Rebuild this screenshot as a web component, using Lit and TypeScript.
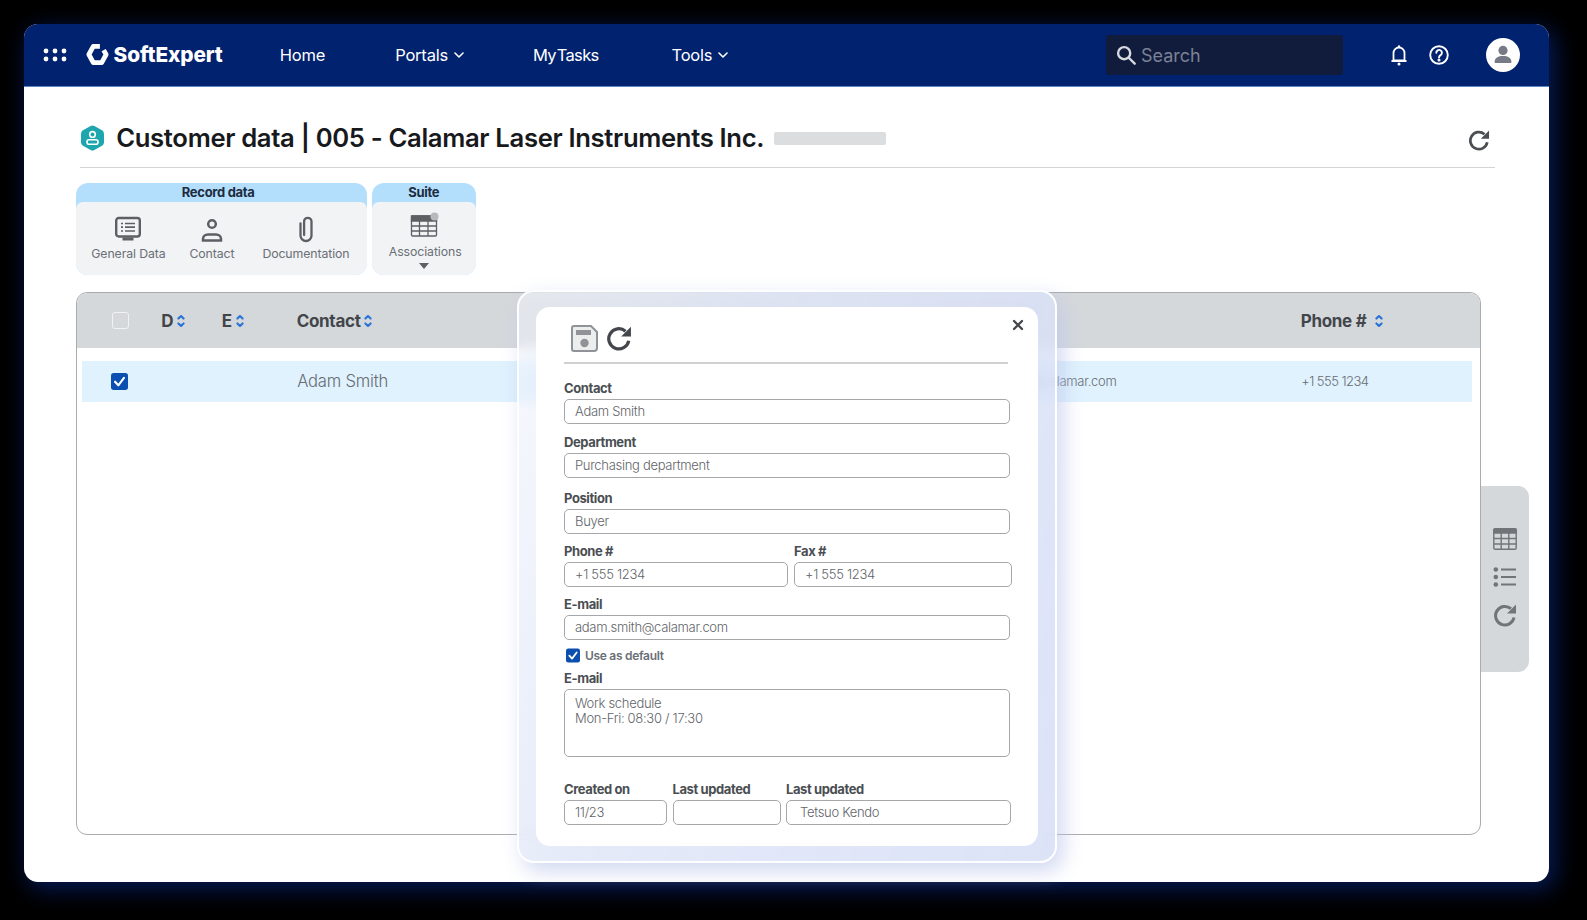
import { LitElement, html, css, svg } from "lit";
import { customElement } from "lit/decorators.js";

const refresh = (cls: string) => html`<svg class=${cls} viewBox="0 0 24 24" fill="none"><path d="M21 14.500A9.300 9.300 0 1 1 18 5.700" stroke="currentColor" stroke-width="3"/><path d="M23 1.500v9h-9z" fill="currentColor"/></svg>`;
const sort = () => html`<svg class="sort" viewBox="0 0 8 14" fill="none" stroke="#2a73d6" stroke-width="2.100" stroke-linecap="round" stroke-linejoin="round"><path d="M1.400 4.600 4 2l2.600 2.600M1.400 9.400 4 12l2.600-2.600"/></svg>`;
const chev = () => html`<svg class="chev" viewBox="0 0 10 6" fill="none" stroke="#fff" stroke-width="1.600" stroke-linecap="round" stroke-linejoin="round"><path d="M1 1l4 4 4-4"/></svg>`;
const check = (cls: string) => html`<svg class=${cls} viewBox="0 0 16 16"><rect width="16" height="16" rx="2.600" fill="#0b4fb0"/><path d="M3.800 8.200 6.900 11.600 12.200 4.600" fill="none" stroke="#fff" stroke-width="2" stroke-linecap="round" stroke-linejoin="round"/></svg>`;
const tableIcon = (cls: string) => html`<svg class=${cls} viewBox="0 0 24 22" fill="none" stroke="currentColor" stroke-width="1.400"><rect x="0.800" y="0.800" width="22.400" height="20.400" rx="1.200"/><path d="M0.800 1.500h22.400v3.500H0.800z" fill="currentColor"/><path d="M0.800 10.500h22.400M0.800 16h22.400M8.200 5v16M15.800 5v16"/></svg>`;

@customElement("app-root")
export class AppRoot extends LitElement {
  static styles = css`
    :host {
      display: block;
      width: 1587px;
      height: 920px;
      box-sizing: border-box;
      padding: 23.5px 0 0 23.5px;
      background: #000;
      overflow: hidden;
      font-family: "Inter", "Noto Sans", sans-serif;
      color: #4a4e52;
    }
    .window {
      position: relative;
      width: 1525.5px;
      height: 858px;
      background: #fff;
      border-radius: 14px;
      box-shadow: 5px 6px 22px 2px rgba(8, 34, 110, 0.75);
      display: flex;
      flex-direction: column;
    }
    .nav {
      height: 63px;
      flex: none;
      display: flex;
      align-items: center;
      box-sizing: border-box;
      padding: 0 29px 0 19px;
      background: #01226f;
      border-bottom: 1px solid #5d86c4;
      border-radius: 14px 14px 0 0;
      color: #fff;
      font-size: 16.5px;
      letter-spacing: -0.2px;
    }
    .dots { width: 24px; height: 14px; flex: none; }
    .hex { width: 23px; height: 23px; margin-left: 19px; flex: none; }
    .brand { font-size: 20.8px; font-weight: 800; margin-left: 5px; letter-spacing: -0.1px; }
    .nav-item { display: flex; align-items: center; gap: 6px; padding-top: 1px; }
    .home { margin-left: 57px; }
    .portals { margin-left: 70px; }
    .tasks { margin-left: 69px; word-spacing: -3px; letter-spacing: -0.7px; }
    .tools { margin-left: 73px; letter-spacing: -0.2px; }
    .chev { width: 10px; height: 6px; }
    .right { margin-left: auto; display: flex; align-items: center; }
    .search {
      width: 237px;
      height: 40px;
      box-sizing: border-box;
      background: #111c3c;
      border-radius: 3px;
      display: flex;
      align-items: center;
      gap: 4px;
      padding: 0 0 0 9px;
      color: #7b8296;
      font-size: 18px;
      letter-spacing: 0;
    }
    .search span { padding-top: 1px; }
    .search svg { width: 22px; height: 22px; flex: none; }
    .bell { width: 18px; height: 22px; margin-left: 47px; }
    .help { width: 20px; height: 20px; margin-left: 21px; }
    .avatar { width: 34px; height: 34px; margin-left: 37px; }

    .content { padding: 31.5px 0 0 52.2px; flex: 1; display: flex; flex-direction: column; }
    .title-row {
      height: 50px;
      width: 1415px;
      margin-left: 4.5px;
      box-sizing: border-box;
      border-bottom: 1px solid #d4d4d4;
      padding-bottom: 10px;
      display: flex;
      align-items: center;
    }
    .title-icon { width: 25px; height: 26px; flex: none; }
    .title-row h1 {
      margin: 0 0 0 11px;
      font-size: 25.65px;
      font-weight: 600;
      color: #17191c;
      letter-spacing: -0.33px;
      white-space: nowrap;
    }
    .blur-bar { width: 112px; height: 13px; margin: 2px 0 0 10px; background: #dcdddf; border-radius: 2px; }
    .title-refresh { width: 22px; height: 22px; margin: 4px 5px 0 auto; color: #4b4f53; }

    .tabs { display: flex; gap: 5px; margin-top: 14.5px; height: 92px; flex: none; }
    .group {
      background: #b3dffd;
      border-radius: 12px;
      display: flex;
      flex-direction: column;
      overflow: hidden;
    }
    .group.rec { width: 291px; }
    .group.suite { width: 104px; }
    .group-head {
      height: 19px;
      flex: none;
      text-align: center;
      font-size: 13px;
      line-height: 18.5px;
      font-weight: 700;
      color: #1d2c3f;
      letter-spacing: -0.3px;
    }
    .rec .group-head { padding-right: 6px; }
    .group-body {
      flex: 1;
      background: #f2f3f5;
      border-radius: 7px 7px 0 0;
      display: grid;
    }
    .rec .group-body { grid-template-columns: 105.5px 61.5px 124px; }
    .tab { display: flex; flex-direction: column; align-items: center; padding-top: 14.5px; color: #6a6f75; font-size: 12.3px; letter-spacing: -0.1px; line-height: 16px; }
    .tab svg.ic { width: 30px; height: 28px; margin-bottom: 2px; color: #5c6065; }
    .tab.doc { padding-left: 2.5px; }
    .suite .tab { padding: 10px 0 0 3px; }
    .suite .tab svg.ic { margin: 0 3px 5px 0; height: 27px; }
    .caret { width: 0; height: 0; border: 5px solid transparent; border-top: 6px solid #5c6065; border-bottom: 0; margin: 3px 2px 0 0; }

    .work { display: flex; margin-top: 17.7px; }
    .table {
      width: 1405.5px;
      height: 542.6px;
      box-sizing: border-box;
      border: 1px solid #a9abad;
      border-radius: 11px;
      overflow: hidden;
      flex: none;
    }
    .grid {
      display: grid;
      grid-template-columns: 49.5px 60.5px 75px 668px 336px 1fr;
      align-items: center;
    }
    .thead {
      height: 55px;
      background: #d5d8db;
      padding-left: 35px;
      font-weight: 700;
      font-size: 17px;
      color: #42464b;
      letter-spacing: -0.3px;
    }
    .th { display: flex; align-items: center; gap: 4px; padding-top: 1px; }
    .th.contact { gap: 3px; }
    .th.phone { gap: 9px; }
    .sort { width: 8px; height: 14px; flex: none; }
    .hcheck { width: 17px; height: 17px; box-sizing: border-box; background: #d5d8db; border: 1.5px solid #f1f2f3; border-radius: 3px; }
    .tbody { padding: 12.5px 8px 0 5px; }
    .row {
      height: 41px;
      background: #dff2fe;
      padding-left: 29px;
      font-size: 13px;
      color: #676c72;
      font-weight: 300;
      letter-spacing: -0.3px;
    }
    .rcheck { width: 17px; height: 17px; display: block; }
    .row .name { font-size: 16.6px; font-weight: 300; letter-spacing: -0.2px; padding: 0 0 1px 1.5px; }
    .row .ph { padding-left: 1.5px; letter-spacing: -0.55px; }
    .side {
      width: 48px;
      height: 186px;
      margin-top: 194px;
      background: #d5d8db;
      border-radius: 0 11px 11px 0;
      display: flex;
      flex-direction: column;
      align-items: center;
      padding-top: 41px;
      box-sizing: border-box;
      gap: 14px;
      color: #70757a;
    }
    .side svg { width: 24px; height: 24px; flex: none; }

    .modal {
      position: absolute;
      left: 493.5px;
      top: 266.5px;
      width: 539.5px;
      height: 573px;
      box-sizing: border-box;
      padding: 15px 17px;
      background: linear-gradient(110deg, rgba(240, 243, 251, 0.5) 0%, rgba(222, 229, 247, 0.8) 35%, rgba(214, 222, 246, 0.85) 100%);
      backdrop-filter: blur(6px);
      border: 2px solid rgba(255, 255, 255, 0.95);
      border-radius: 17px;
      box-shadow: 6px 8px 20px rgba(190, 200, 235, 0.7);
    }
    .sheet {
      position: relative;
      height: 539px;
      background: #fff;
      border-radius: 14px;
      padding: 0 0 0 28px;
      box-sizing: border-box;
      font-size: 13px;
    }
    .close { position: absolute; right: 14px; top: 12px; width: 12px; height: 12px; }
    .tools-bar {
      width: 444px;
      height: 56.500px;
      box-sizing: border-box;
      border-bottom: 2px solid #cfd0d2;
      display: flex;
      align-items: flex-start;
      padding: 18px 0 0 7px;
      gap: 8px;
    }
    .save { width: 27px; height: 27px; color: #8f9397; }
    .mod-refresh { width: 26px; height: 26px; color: #43474b; }
    .form { width: 448.5px; }
    .lab { display: block; height: 16px; line-height: 16px; font-weight: 700; font-size: 13px; color: #4a4e52; letter-spacing: -0.4px; white-space: nowrap; margin-bottom: 3px; }
    .inp {
      height: 24.5px;
      box-sizing: border-box;
      border: 1px solid #a5a7aa;
      border-radius: 5px;
      padding: 0 10px;
      line-height: 23px;
      font-size: 13px;
      font-weight: 300;
      color: #5f6469;
      letter-spacing: -0.3px;
      white-space: nowrap;
    }
    .full { width: 445.5px; }
    .area { height: 68px; padding-top: 6px; line-height: 15px; }
    .mt17 { margin-top: 16.5px; }
    .mt11 { margin-top: 10.5px; }
    .mt13 { margin-top: 12.5px; }
    .mt10 { margin-top: 9.5px; }
    .mt9 { margin-top: 9.5px; }
    .mt8 { margin-top: 8px; }
    .mt7 { margin-top: 7.5px; }
    .mt25 { margin-top: 24px; }
    .two { display: grid; grid-template-columns: 224px 217.5px; column-gap: 6px; }
    .three { display: grid; grid-template-columns: 103px 108px 225px; column-gap: 5.5px; }
    .indent { padding-left: 13px; }
    .default { display: flex; align-items: center; gap: 5px; height: 15px; padding-left: 2px; font-size: 12px; font-weight: 600; color: #6a6f75; letter-spacing: -0.3px; }
    .default svg { width: 14px; height: 15px; flex: none; }
  `;

  render() {
    return html`
      <div class="window">
        <header class="nav">
          <svg class="dots" viewBox="0 0 24 14" fill="#fff">
            ${[3, 12, 21].flatMap((x) => [3, 11].map((y) => svg`<circle cx=${x} cy=${y} r="2.400"/>`))}
          </svg>
          <svg class="hex" viewBox="0 0 24 24" fill="none" stroke="#fff" stroke-width="5" stroke-linejoin="round">
            <path d="M14.500 3.500H7.600L3 12l4.600 8.500h8.800L21 12l-2.600-4.600"/>
          </svg>
          <span class="brand">SoftExpert</span>
          <span class="nav-item home">Home</span>
          <span class="nav-item portals">Portals ${chev()}</span>
          <span class="nav-item tasks">My Tasks</span>
          <span class="nav-item tools">Tools ${chev()}</span>
          <div class="right">
            <div class="search">
              <svg viewBox="0 0 24 24" fill="none" stroke="#d6d9e0" stroke-width="2.600" stroke-linecap="round"><circle cx="10" cy="10" r="6.600"/><path d="M15 15l6.500 6.500"/></svg>
              <span>Search</span>
            </div>
            <svg class="bell" viewBox="0 0 18 22" fill="none" stroke="#fff" stroke-width="1.800" stroke-linejoin="round"><path d="M3.500 16.500V9a5.500 5.500 0 0 1 11 0v7.500zM1.500 17h15" /><circle cx="9" cy="2.400" r="1.200" fill="#fff" stroke="none"/><circle cx="9" cy="20" r="1.500" fill="#fff" stroke="none"/></svg>
            <svg class="help" viewBox="0 0 20 20" fill="none" stroke="#fff" stroke-width="1.900" stroke-linecap="round"><circle cx="10" cy="10" r="8.800"/><path d="M7.300 7.800a2.800 2.800 0 1 1 4.300 2.300c-1 .7-1.600 1.200-1.600 2.300"/><circle cx="10" cy="15" r="0.600" fill="#fff"/></svg>
            <svg class="avatar" viewBox="0 0 34 34"><circle cx="17" cy="17" r="17" fill="#fff"/><circle cx="17" cy="12.400" r="4.600" fill="#767b85"/><path d="M8.600 24c0-4.200 3.600-6 8.400-6s8.400 1.800 8.400 6c0 .6-.4 1-1 1H9.600c-.6 0-1-.4-1-1z" fill="#767b85"/></svg>
          </div>
        </header>
        <main class="content">
          <div class="title-row">
            <svg class="title-icon" viewBox="0 0 25 26"><path d="M10.600 1a4 4 0 0 1 3.800 0l7.600 4.300a4 4 0 0 1 2 3.400v8.600a4 4 0 0 1-2 3.400L14.400 25a4 4 0 0 1-3.800 0L3 20.700a4 4 0 0 1-2-3.400V8.700a4 4 0 0 1 2-3.400z" fill="#1da6ad"/><circle cx="12.500" cy="9.400" r="2.800" fill="none" stroke="#fff" stroke-width="1.600"/><rect x="7" y="14.800" width="11" height="4.400" rx="2" fill="none" stroke="#fff" stroke-width="1.600"/></svg>
            <h1>Customer data | 005 - Calamar Laser Instruments Inc.</h1>
            <div class="blur-bar"></div>
            ${refresh("title-refresh")}
          </div>
          <div class="tabs">
            <section class="group rec">
              <div class="group-head">Record data</div>
              <div class="group-body">
                <div class="tab">
                  <svg class="ic" viewBox="0 0 30 28" fill="none" stroke="currentColor" stroke-width="2.400"><rect x="3.200" y="2" width="23.600" height="18.500" rx="2.500"/><path d="M8 7.500h2M12 7.500h10M8 11.200h2M12 11.200h10M8 15h2M12 15h10" stroke-width="1.700"/><path d="M9.500 21.500h11v3h-11z" fill="currentColor" stroke="none"/></svg>
                  General Data
                </div>
                <div class="tab">
                  <svg class="ic" viewBox="0 0 30 28" fill="none" stroke="currentColor" stroke-width="2.500"><circle cx="15" cy="8" r="3.800"/><path d="M6 24.500v-1.500c0-2.800 2.200-4.500 5-4.500h8c2.800 0 5 1.700 5 4.500v1.500z"/></svg>
                  Contact
                </div>
                <div class="tab doc">
                  <svg class="ic" viewBox="0 0 30 28" fill="none" stroke="currentColor" stroke-width="2.300" stroke-linecap="round"><path d="M9.500 7.500v12a5.500 5.500 0 0 0 11 0V5.500a3.700 3.700 0 0 0-7.400 0v13.500"/></svg>
                  Documentation
                </div>
              </div>
            </section>
            <section class="group suite">
              <div class="group-head">Suite</div>
              <div class="group-body">
                <div class="tab">
                  <svg class="ic" viewBox="0 0 30 27" fill="none" stroke="currentColor" stroke-width="1.300">
                    <rect x="2.500" y="4" width="25" height="20" rx="1"/><path d="M2.500 4h25v5h-25z" fill="currentColor"/><path d="M2.500 14h25M2.500 19h25M10.500 9v15M19 9v15"/>
                    <circle cx="25.500" cy="4.500" r="4" fill="#b6babe" stroke="none"/>
                  </svg>
                  Associations
                  <div class="caret"></div>
                </div>
              </div>
            </section>
          </div>
          <div class="work">
            <div class="table">
              <div class="grid thead">
                <div class="hcheck"></div>
                <div class="th">D ${sort()}</div>
                <div class="th">E ${sort()}</div>
                <div class="th contact">Contact ${sort()}</div>
                <div class="th"></div>
                <div class="th phone">Phone # ${sort()}</div>
              </div>
              <div class="tbody">
                <div class="grid row">
                  ${check("rcheck")}
                  <div></div>
                  <div></div>
                  <div class="name">Adam Smith</div>
                  <div>adam.smith@calamar.com</div>
                  <div class="ph">+1 555 1234</div>
                </div>
              </div>
            </div>
            <aside class="side">
              ${tableIcon("")}
              <svg viewBox="0 0 24 24" fill="none" stroke="currentColor" stroke-width="2"><path d="M8 4.500h15M8 12h15M8 19.500h15"/><circle cx="2.800" cy="4.500" r="2.300" fill="currentColor" stroke="none"/><circle cx="2.800" cy="12" r="2.300" fill="currentColor" stroke="none"/><circle cx="2.800" cy="19.500" r="2.300" fill="currentColor" stroke="none"/></svg>
              ${refresh("")}
            </aside>
          </div>
        </main>
        <div class="modal">
          <div class="sheet">
            <svg class="close" viewBox="0 0 12 12" stroke="#43474b" stroke-width="2.400" stroke-linecap="round"><path d="M2 2l8 8M10 2l-8 8"/></svg>
            <div class="tools-bar">
              <svg class="save" viewBox="0 0 27 27"><path d="M3 1h17l6 6v16a3 3 0 0 1-3 3H3a2 2 0 0 1-2-2V3a2 2 0 0 1 2-2z" fill="#eceded" stroke="currentColor" stroke-width="2"/><rect x="5" y="5" width="15" height="5" fill="currentColor"/><circle cx="13.500" cy="18" r="4.200" fill="currentColor"/></svg>
              ${refresh("mod-refresh")}
            </div>
            <div class="form">
              <label class="lab mt17">Contact</label>
              <div class="inp full">Adam Smith</div>
              <label class="lab mt11">Department</label>
              <div class="inp full">Purchasing department</div>
              <label class="lab mt13">Position</label>
              <div class="inp full">Buyer</div>
              <div class="two mt10">
                <div><label class="lab">Phone #</label><div class="inp">+1 555 1234</div></div>
                <div><label class="lab">Fax #</label><div class="inp">+1 555 1234</div></div>
              </div>
              <label class="lab mt9">E-mail</label>
              <div class="inp full">adam.smith@calamar.com</div>
              <div class="default mt8">${check("")}<span>Use as default</span></div>
              <label class="lab mt7">E-mail</label>
              <div class="inp full area">Work schedule<br />Mon-Fri: 08:30 / 17:30</div>
              <div class="three mt25">
                <div><label class="lab">Created on</label><div class="inp">11/23</div></div>
                <div><label class="lab">Last updated</label><div class="inp"></div></div>
                <div><label class="lab">Last updated</label><div class="inp indent">Tetsuo Kendo</div></div>
              </div>
            </div>
          </div>
        </div>
      </div>
    `;
  }
}
